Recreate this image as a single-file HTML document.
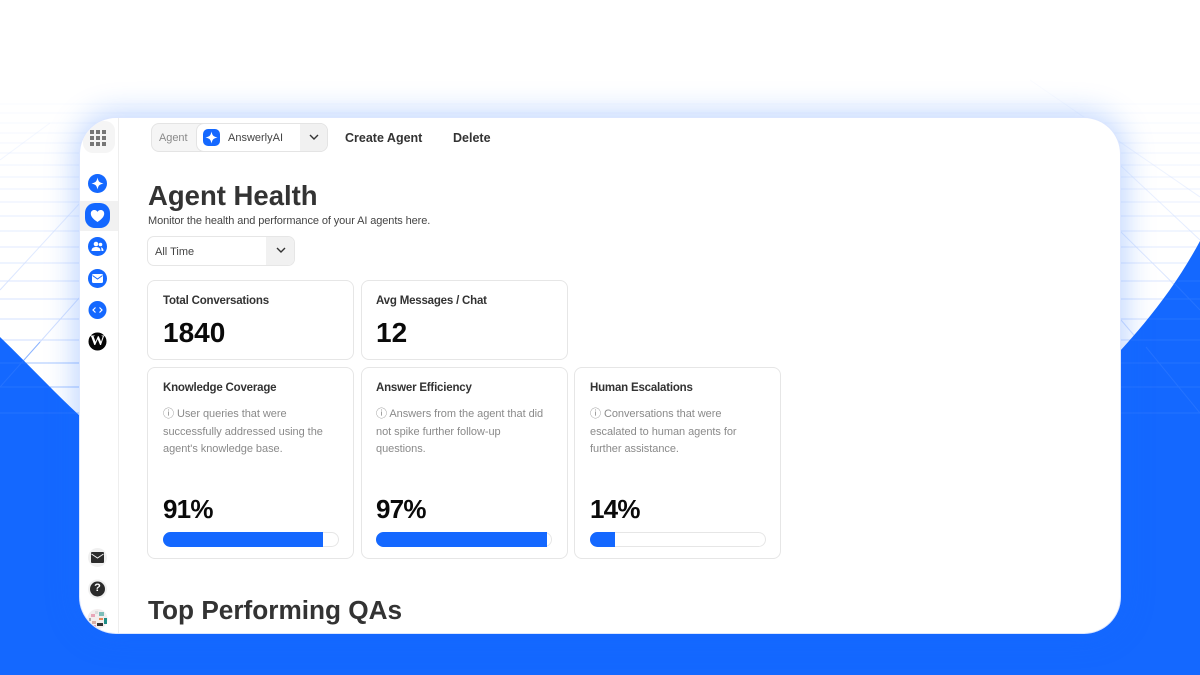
<!DOCTYPE html>
<html><head><meta charset="utf-8"><style>
html,body{margin:0;padding:0;width:1200px;height:675px;overflow:hidden;background:#fff;font-family:"Liberation Sans",sans-serif;color:#333}
#bg{position:absolute;left:0;top:0}
#card{position:absolute;left:80px;top:118px;width:1040px;height:515px;background:#fff;border-radius:36px;box-shadow:0 0 0 1px #dbe6ff,0 0 30px 5px rgba(20,104,255,.28);overflow:hidden}
.a{position:absolute;white-space:nowrap}
.box{position:absolute;box-sizing:border-box;background:#fff;border:1px solid #e6e6e6;border-radius:8px}
.t{font-weight:700;font-size:11.5px;letter-spacing:-.2px;color:#333}
.n{font-weight:700;color:#0a0a0a;font-size:28px}
.p{font-weight:700;color:#0a0a0a;font-size:26px;letter-spacing:-.8px}
.d{font-size:11px;letter-spacing:-.05px;color:#8a8a8a;line-height:17.5px}
.bar{position:absolute;box-sizing:border-box;height:15px;border:1px solid #e6e6e6;border-radius:8px;background:#fff}
.bar i{position:absolute;left:-1px;top:-1px;display:block;height:15px;background:#1468ff;border-radius:8px 0 0 8px}
</style></head><body>
<svg id="bg" width="1200" height="675" viewBox="0 0 1200 675">
<defs><linearGradient id="f" x1="0" y1="95" x2="0" y2="340" gradientUnits="userSpaceOnUse"><stop offset="0" stop-color="#d5e2ff" stop-opacity=".12"/><stop offset="1" stop-color="#cfdeff" stop-opacity="1"/></linearGradient></defs>
<g stroke="url(#f)" stroke-width="1" fill="none">
<path d="M0 104H1200M0 113H1200M0 123H1200M0 133H1200M0 143H1200M0 153H1200M0 165H1200M0 177H1200M0 189H1200M0 202H1200M0 216H1200M0 231H1200M0 247H1200M0 263H1200M0 281H1200M0 299H1200M0 319H1200M0 340H1200"/>
<path d="M1030 80L1200 197M1121 166L1200 240M1121 232L1200 310M1121 320L1200 413M0 160L50 123M0 290L80 203M0 387L80 297"/>
</g>
<path d="M0 337 C28 364 54 392 80 416 L1120 351 C1152 316 1178 282 1200 241 V675 H0Z" fill="#1468ff"/>
<path d="M0 363H80M0 387H80M0 413H80M1120 363H1200M1120 387H1200M1120 413H1200M1174 283L1200 310M1146 347L1200 413M1178 281H1200M1165 299H1200M1149 319H1200M1131 340H1200M0 387L40 342" stroke="#3a80ff" stroke-width="1" opacity=".45" fill="none"/>
</svg>
<div id="card">
<div class="a" style="left:38px;top:0;width:1px;height:516px;background:#eee"></div>
<div class="a" style="left:3px;top:3px;width:32px;height:32px;background:#f5f5f5;border-radius:10px"></div>
<svg class="a" style="left:10px;top:12px" width="16" height="16" fill="#777"><rect x="0" y="0" width="4" height="4"/><rect x="6" y="0" width="4" height="4"/><rect x="12" y="0" width="4" height="4"/><rect x="0" y="6" width="4" height="4"/><rect x="6" y="6" width="4" height="4"/><rect x="12" y="6" width="4" height="4"/><rect x="0" y="12" width="4" height="4"/><rect x="6" y="12" width="4" height="4"/><rect x="12" y="12" width="4" height="4"/></svg>
<div class="a" style="left:0;top:83px;width:38px;height:30px;background:#f1f1f1"></div>
<svg class="a" style="left:0;top:50px" width="38" height="190" viewBox="0 0 38 190">
<circle cx="17.5" cy="15.500" r="9.500" fill="#1468ff"/><path d="M17.500 9.500C18.300 13.500 19.500 14.700 23.500 15.500C19.500 16.300 18.300 17.500 17.500 21.500C16.700 17.500 15.500 16.300 11.500 15.500C15.500 14.700 16.700 13.500 17.500 9.500Z" fill="#fff"/>
<rect x="5" y="35" width="25" height="25" rx="10" fill="#1468ff"/><path d="M17.500 54C13 51 10.800 48.500 10.800 45.500C10.800 43.300 12.500 42 14.300 42C15.700 42 16.900 42.700 17.500 43.900C18.100 42.700 19.300 42 20.700 42C22.500 42 24.200 43.300 24.200 45.500C24.200 48.500 22 51 17.500 54Z" fill="#fff"/>
<circle cx="17.500" cy="78.500" r="9.500" fill="#1468ff"/><circle cx="16" cy="76" r="2.300" fill="#fff"/><circle cx="20.500" cy="76.500" r="1.800" fill="#fff"/><path d="M11.500 83C11.500 80 13.500 79 16 79C18.500 79 20.500 80 20.500 83Z" fill="#fff"/><path d="M21.500 83H23.500C23.500 81 22.700 79.800 20.800 79.300C21.300 80.300 21.500 81.500 21.500 83Z" fill="#fff"/>
<circle cx="17.500" cy="110.500" r="9.500" fill="#1468ff"/><rect x="12" y="106" width="11" height="9" rx="1.500" fill="#fff"/><path d="M12.500 107.500L17.500 111L22.500 107.500" stroke="#1468ff" stroke-width="1" fill="none"/>
<circle cx="17.500" cy="142" r="9" fill="#1468ff"/><path d="M15.500 139.500L13 142L15.500 144.500M19.500 139.500L22 142L19.500 144.500" stroke="#fff" stroke-width="1.200" fill="none"/>
<circle cx="17.500" cy="173.500" r="9" fill="#050505"/>
</svg>
<div class="a" style="left:8px;top:216px;width:19px;text-align:center;font:700 15px/15px 'Liberation Serif',serif;color:#fff">W</div>
<svg class="a" style="left:0;top:420px" width="38" height="96" viewBox="0 0 38 96">
<circle cx="17.500" cy="19.500" r="9.500" fill="#f0f0f0"/><rect x="11" y="14" width="13" height="11" rx="1" fill="#2b2b2b"/><path d="M11.500 16L17.500 20L23.500 16" stroke="#f0f0f0" stroke-width="1" fill="none"/>
<circle cx="17.500" cy="51" r="9.500" fill="#f0f0f0"/><circle cx="17.500" cy="51" r="7.500" fill="#2b2b2b"/>
<circle cx="17.500" cy="81" r="10" fill="#f3eeee"/><rect x="19" y="74" width="5" height="4" fill="#7dbdb8"/><rect x="11" y="76" width="4" height="3" fill="#e8a6b8"/><rect x="17" y="85" width="6" height="3" fill="#333"/><rect x="24" y="80" width="3" height="6" fill="#1e8f88"/><rect x="12" y="83" width="4" height="3" fill="#d8b0a8"/><rect x="19" y="80" width="4" height="2" fill="#e58a5a"/><rect x="9" y="80" width="2" height="3" fill="#aaa"/><rect x="15" y="73" width="3" height="3" fill="#ddd"/><rect x="13" y="87" width="3" height="2" fill="#e9a0b5"/>
</svg>
<div class="a" style="left:14px;top:464px;width:7px;text-align:center;font:700 11px/12px 'Liberation Sans',sans-serif;color:#fff">?</div>

<div class="a" style="left:71px;top:5px;width:177px;height:29px;box-sizing:border-box;background:#f5f5f5;border:1px solid #e4e4e4;border-radius:8px"></div>
<div class="a" style="left:116px;top:5px;width:132px;height:29px;box-sizing:border-box;background:#fff;border:1px solid #e4e4e4;border-radius:8px;overflow:hidden"><div style="position:absolute;right:0;top:0;width:27px;height:27px;background:#f1f1f1"></div></div>
<div class="a" style="left:79px;top:14px;font-size:11px;letter-spacing:-.05px;color:#8a8a8a;line-height:13px">Agent</div>
<svg class="a" style="left:123px;top:11px" width="18" height="18"><rect width="17" height="17" rx="5" fill="#1468ff"/><path d="M8.500 2.500C9.300 6.500 10.500 7.700 14.500 8.500C10.500 9.300 9.300 10.500 8.500 14.500C7.700 10.500 6.500 9.300 2.500 8.500C6.500 7.700 7.700 6.500 8.500 2.500Z" fill="#fff"/></svg>
<div class="a" style="left:148px;top:14px;font-size:11px;color:#444;line-height:13px">AnswerlyAI</div>
<svg class="a" style="left:229px;top:16px" width="10" height="7"><path d="M1 1L5 5L9 1" stroke="#333" stroke-width="1.400" fill="none"/></svg>
<div class="a" style="left:265px;top:13px;font-size:12.500px;font-weight:700;line-height:15px;color:#333">Create Agent</div>
<div class="a" style="left:373px;top:13px;font-size:12.500px;font-weight:700;line-height:15px;color:#333">Delete</div>

<div class="a" style="left:68px;top:62px;font-size:27.500px;font-weight:700;line-height:32px;color:#333">Agent Health</div>
<div class="a" style="left:68px;top:96px;font-size:11px;letter-spacing:-.1px;line-height:14px;color:#444">Monitor the health and performance of your AI agents here.</div>

<div class="a" style="left:67px;top:118px;width:148px;height:30px;box-sizing:border-box;background:#fff;border:1px solid #e6e6e6;border-radius:7px;overflow:hidden"><div style="position:absolute;right:0;top:0;width:28px;height:28px;background:#f1f1f1"></div></div>
<div class="a" style="left:75px;top:127px;font-size:11px;color:#444;line-height:14px">All Time</div>
<svg class="a" style="left:196px;top:129px" width="10" height="7"><path d="M1 1L5 5L9 1" stroke="#333" stroke-width="1.400" fill="none"/></svg>

<div class="box" style="left:67px;top:162px;width:207px;height:80px"></div>
<div class="box" style="left:281px;top:162px;width:207px;height:80px"></div>
<div class="box" style="left:67px;top:249px;width:207px;height:192px"></div>
<div class="box" style="left:281px;top:249px;width:207px;height:192px"></div>
<div class="box" style="left:494px;top:249px;width:207px;height:192px"></div>

<div class="a t" style="left:83px;top:176px;line-height:14px">Total Conversations</div>
<div class="a n" style="left:83px;top:199px;line-height:32px">1840</div>
<div class="a t" style="left:296px;top:176px;line-height:14px">Avg Messages / Chat</div>
<div class="a n" style="left:296px;top:199px;line-height:32px">12</div>

<div class="a t" style="left:83px;top:263px;line-height:14px">Knowledge Coverage</div>
<div class="a d" style="left:83px;top:288px">ⓘ User queries that were<br>successfully addressed using the<br>agent's knowledge base.</div>
<div class="a p" style="left:83px;top:375px;line-height:32px">91%</div>
<div class="bar" style="left:83px;top:414px;width:176px"><i style="width:160px"></i></div>

<div class="a t" style="left:296px;top:263px;line-height:14px">Answer Efficiency</div>
<div class="a d" style="left:296px;top:288px">ⓘ Answers from the agent that did<br>not spike further follow-up<br>questions.</div>
<div class="a p" style="left:296px;top:375px;line-height:32px">97%</div>
<div class="bar" style="left:296px;top:414px;width:176px"><i style="width:171px"></i></div>

<div class="a t" style="left:510px;top:263px;line-height:14px">Human Escalations</div>
<div class="a d" style="left:510px;top:288px">ⓘ Conversations that were<br>escalated to human agents for<br>further assistance.</div>
<div class="a p" style="left:510px;top:375px;line-height:32px">14%</div>
<div class="bar" style="left:510px;top:414px;width:176px"><i style="width:25px"></i></div>

<div class="a" style="left:68px;top:476px;font-size:26.200px;font-weight:700;line-height:32px;color:#333">Top Performing QAs</div>
</div>
</body></html>
